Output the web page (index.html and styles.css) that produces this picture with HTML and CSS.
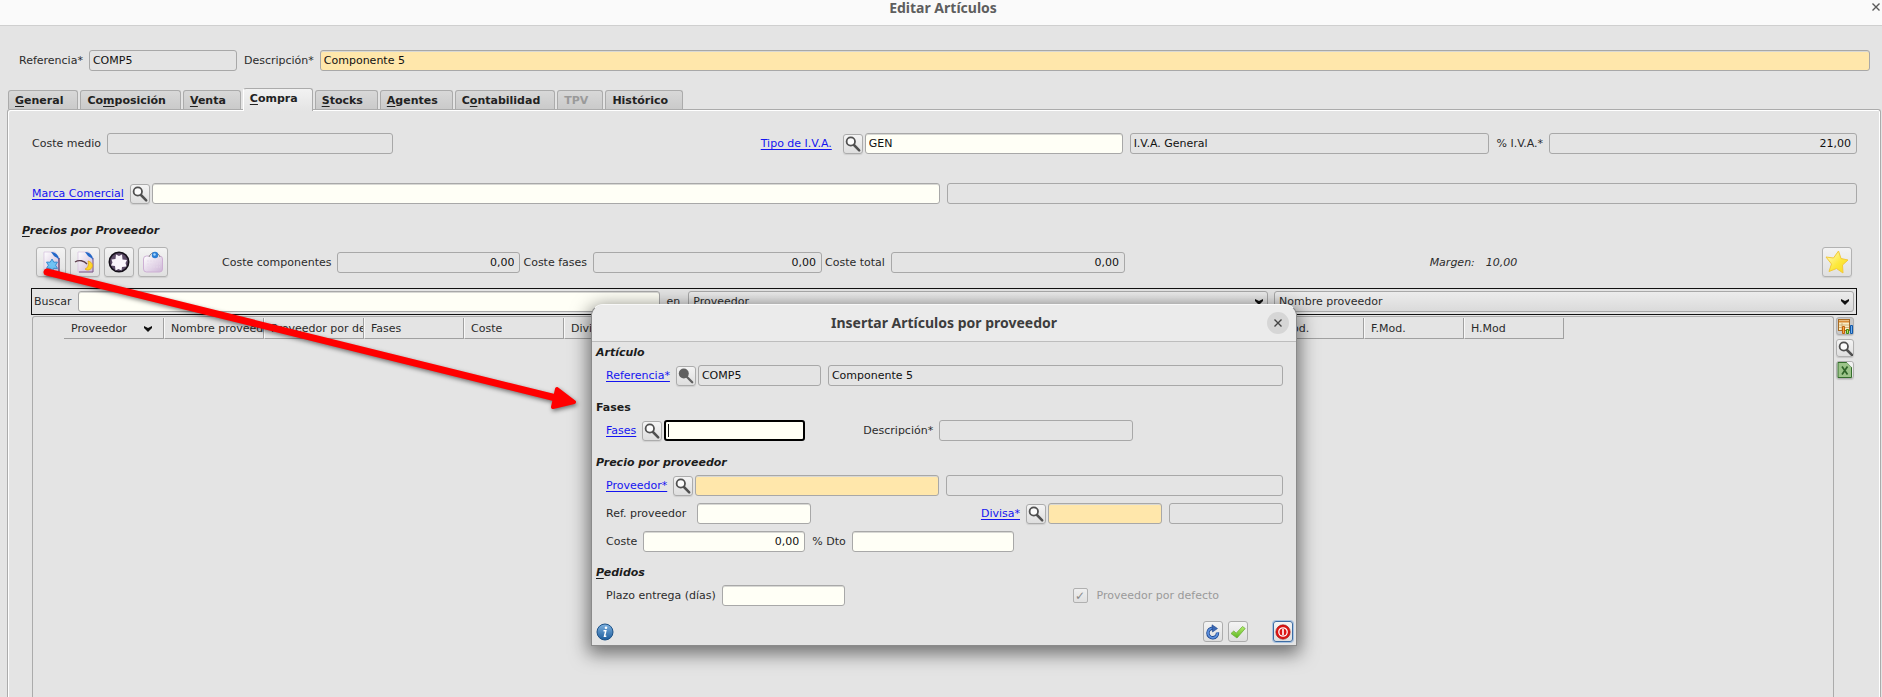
FILE: index.html
```html
<!DOCTYPE html>
<html lang="es">
<head>
<meta charset="utf-8">
<title>Editar Artículos</title>
<link rel="stylesheet" href="styles.css">
</head>
<body>
<svg class="defs" aria-hidden="true">
  <defs>
    <linearGradient id="shade" x1="0" y1="0" x2="1" y2="1"><stop offset="0" stop-color="#fff"/><stop offset="1" stop-color="#cdb5d6"/></linearGradient>
    <linearGradient id="leaf" x1="0" y1="0" x2="0" y2="1"><stop offset="0" stop-color="#b6ef6e"/><stop offset="1" stop-color="#5cb520"/></linearGradient>
    <linearGradient id="sky" x1="0" y1="0" x2="0" y2="1"><stop offset="0" stop-color="#7fb2e0"/><stop offset="1" stop-color="#1c5c9c"/></linearGradient>
    <linearGradient id="gold" x1="0" y1="0" x2="1" y2="1"><stop offset="0" stop-color="#fffbd0"/><stop offset="0.55" stop-color="#fde93c"/><stop offset="1" stop-color="#f8d820"/></linearGradient>
    <symbol id="lens" viewBox="0 0 18 18"><circle cx="6.800" cy="6.500" r="4.200" fill="#fcfcfc" stroke="#505050" stroke-width="1.800"/><path d="M10 10l5.200 5.300" stroke="#505050" stroke-width="2.500" stroke-linecap="round"/></symbol>
    <symbol id="lens-off" viewBox="0 0 18 18"><circle cx="6.800" cy="6.500" r="5" fill="#606060"/><path d="M10 10l5.200 5.300" stroke="#606060" stroke-width="2.300" stroke-linecap="round"/></symbol>
  </defs>
</svg>

<header class="titlebar">
  <h1 class="title">Editar Artículos</h1>
  <button class="window-close" aria-label="Cerrar"><svg viewBox="0 0 8 8" width="8" height="8"><path d="M.5.5l7 7M7.5.5l-7 7" stroke="#5a5a5a" stroke-width="1.4"/></svg></button>
</header>

<main class="window">
  <div class="row head-row">
    <label for="ref">Referencia*</label>
    <input class="field ro head-ref" id="ref" value="COMP5" readonly>
    <label class="next" for="desc">Descripción*</label>
    <input class="field need wide" id="desc" value="Componente 5">
  </div>

  <nav class="tabs">
    <button class="tab"><u>G</u>eneral</button>
    <button class="tab">Co<u>m</u>posición</button>
    <button class="tab"><u>V</u>enta</button>
    <button class="tab active"><u>C</u>ompra</button>
    <button class="tab"><u>S</u>tocks</button>
    <button class="tab"><u>A</u>gentes</button>
    <button class="tab">C<u>o</u>ntabilidad</button>
    <button class="tab" disabled>TPV</button>
    <button class="tab">Histórico</button>
  </nav>

  <section class="pane">
    <div class="row vat-row">
      <div class="row cost-part">
        <label for="medio">Coste medio</label>
        <input class="field ro cost-mean" id="medio" readonly>
      </div>
      <a class="link vat-link" href="#iva">Tipo de I.V.A.</a>
      <button class="lens-btn" aria-label="Buscar tipo de I.V.A."><svg><use href="#lens"/></svg></button>
      <input class="field vat-code" id="iva" aria-label="Tipo de I.V.A." value="GEN">
      <input class="field ro vat-name next" aria-label="Nombre de I.V.A." value="I.V.A. General" readonly>
      <label class="next" for="pct">% I.V.A.*</label>
      <input class="field ro num vat-pct" id="pct" value="21,00" readonly>
    </div>

    <div class="row brand-row">
      <a class="link" href="#marca">Marca Comercial</a>
      <button class="lens-btn" aria-label="Buscar marca"><svg><use href="#lens"/></svg></button>
      <input class="field brand-code" id="marca" aria-label="Marca Comercial">
      <input class="field ro brand-name next" aria-label="Nombre de marca" readonly>
    </div>

    <h2 class="group prices"><u>P</u>recios por Proveedor</h2>

    <div class="row tool-row">
      <div class="tools">
        <button class="tool" aria-label="Nuevo"><svg viewBox="0 0 24 24"><path d="M5 2h11l4 6v14H5z" fill="url(#shade)" stroke="#d4bfdc" stroke-width=".7"/><path d="M20 8v14" stroke="#57305f" stroke-width="1.2"/><path d="M12 2c4 0 8 3 8 8-2-3-4-3-5-4z" fill="#2268c8"/><path d="M13 9l1.800 3.200 3.700-.1-1.900 3.100 1.900 3.200-3.700-.1L13 21.500l-1.800-3.200-3.700.1 1.900-3.200-1.900-3.100 3.700.1z" fill="#6fc3f5" stroke="#2f87cd" stroke-width=".9"/></svg></button>
        <button class="tool" aria-label="Editar"><svg viewBox="0 0 24 24"><path d="M5 2h11l4 6v14H5z" fill="url(#shade)" stroke="#d4bfdc" stroke-width=".7"/><path d="M20 8v14H6" fill="none" stroke="#7b5a86" stroke-width="1"/><path d="M12 2c4 0 8 3 8 8-2-3-4-3-5-4z" fill="#2268c8"/><path d="M2 12c4-2.500 9-1.500 12 2" fill="none" stroke="#5a3b4a" stroke-width="1.300"/><path d="M15 11c5 1 6 6 2 8.500-2 1-4 .5-5-.5 3-1 4-4 3-8z" fill="#ffd829" stroke="#e2a714" stroke-width=".8"/></svg></button>
        <button class="tool" aria-label="Borrar"><svg viewBox="0 0 24 24"><circle cx="12" cy="12" r="9.700" fill="#5d4b68" stroke="#15101a" stroke-width="1.600"/><path d="M9 4.500l3 1.500 3-1.500.5 5 4.500.5-1.500 3 1 3.500-4.500.5-.5 3.500-3-1.500-3 1.500-.5-4.500-4-.5 1.500-3L4.500 9.500 8.500 9z" fill="#fbf6fc"/></svg></button>
        <button class="tool" aria-label="Ver"><svg viewBox="0 0 24 24"><rect x="2.500" y="6" width="19" height="16" rx="3" fill="url(#shade)" stroke="#cdb0d4"/><path d="M6 11h13M6 14h13M6 17h13" stroke="#e6d8ea" stroke-width=".8" stroke-dasharray="2 1"/><path d="M8 7c2-6 9-6 11 0" fill="#e8e8f0" stroke="#888" stroke-width="1"/><circle cx="14" cy="5" r="3.200" fill="#2c7ed4"/><circle cx="13.500" cy="4.500" r="1.200" fill="#a8d8ff"/></svg></button>
      </div>
      <label for="comp">Coste componentes</label>
      <input class="field ro num cost-comp" id="comp" value="0,00" readonly>
      <label class="tight" for="fas">Coste fases</label>
      <input class="field ro num cost-phase" id="fas" value="0,00" readonly>
      <label class="tight" for="tot">Coste total</label>
      <input class="field ro num cost-total" id="tot" value="0,00" readonly>
      <div class="margin-part"><em>Margen:</em><em>10,00</em></div>
      <button class="tool" aria-label="Favorito"><svg viewBox="0 0 24 24"><path d="M13.500 1l2.500 7.500 7 1.500-5.500 5 .5 8-6.500-4.500L4 21.500 6.500 14 1 7l7.500 1z" fill="url(#gold)" stroke="#f3c93a" stroke-width="1"/></svg></button>
    </div>

    <div class="search">
      <label for="buscar">Buscar</label>
      <input class="field wide" id="buscar">
      <label class="in" for="col1">en</label>
      <div class="combo"><select id="col1"><option>Proveedor</option></select><svg viewBox="0 0 8 6"><path d="M0 0l4 2 4-2v2L4 6 0 2z" fill="#111"/></svg></div>
      <div class="combo"><select aria-label="Segunda columna"><option>Nombre proveedor</option></select><svg viewBox="0 0 8 6"><path d="M0 0l4 2 4-2v2L4 6 0 2z" fill="#111"/></svg></div>
    </div>

    <div class="results">
      <div class="grid-frame">
        <table class="grid">
          <thead><tr>
            <td class="mark"></td>
            <th class="sorted"><span>Proveedor</span><svg viewBox="0 0 8 6"><path d="M0 0l4 2 4-2v2L4 6 0 2z" fill="#111"/></svg></th>
            <th>Nombre proveedor</th><th>Proveedor por defecto</th><th>Fases</th><th>Coste</th><th>Divisa</th>
            <th></th><th></th><th></th><th></th><th></th><th></th>
            <th>U.Mod.</th><th>F.Mod.</th><th>H.Mod</th>
          </tr></thead>
        </table>
      </div>
      <div class="side">
        <button class="side-btn pressed" aria-label="Columnas"><svg viewBox="0 0 16 16"><rect x="1.500" y="1.500" width="11" height="11" fill="#f7ecc4" stroke="#a66a24"/><path d="M2 3.500h10" stroke="#d98a35" stroke-width="2"/><path d="M2 7h10M2 9.500h10M5 5v7" stroke="#c9a368" stroke-width=".8"/><path d="M5.500 15.500v-7h2v7z" fill="#f7a94a" stroke="#c0600c"/><path d="M9.500 15.500v-4h2v4z" fill="#b5e26a" stroke="#3f8a10"/><path d="M13.500 15.500v-8h2v8z" fill="#6fb0f0" stroke="#1258a8"/></svg></button>
        <button class="side-btn" aria-label="Buscar"><svg viewBox="0 0 16 16"><use href="#lens" width="18" height="18"/></svg></button>
        <button class="side-btn" aria-label="Exportar"><svg viewBox="0 0 16 16"><path d="M1 .5h9l4.500 4.500v10.500H1z" fill="#9cc489" stroke="#356e2c"/><path d="M9.500 0L15 5.500V0z" fill="#f2f2f2"/><path d="M5 4.500l5.500 8M10.500 4.500L5 12.500" stroke="#2f6428" stroke-width="1.700"/></svg></button>
      </div>
    </div>
  </section>
</main>

<section class="dialog" role="dialog" aria-labelledby="dlg-title">
  <header class="dialog-bar">
    <h2 class="title" id="dlg-title">Insertar Artículos por proveedor</h2>
    <button class="round-close" aria-label="Cerrar"><svg viewBox="0 0 8 8" width="8" height="8"><path d="M.5.5l7 7M7.5.5l-7 7" stroke="#444" stroke-width="1.4"/></svg></button>
  </header>
  <div class="dialog-body">
    <h3 class="group">Artículo</h3>
    <div class="row indent">
      <a class="link" href="#d-ref">Referencia*</a>
      <button class="lens-btn" aria-label="Buscar referencia" disabled><svg><use href="#lens-off"/></svg></button>
      <input class="field ro w-code" id="d-ref" aria-label="Referencia" value="COMP5" readonly>
      <input class="field ro wide next" aria-label="Nombre del artículo" value="Componente 5" readonly>
    </div>
    <h3 class="group plain spaced">Fases</h3>
    <div class="row indent">
      <a class="link" href="#d-fase">Fases</a>
      <button class="lens-btn" aria-label="Buscar fase"><svg><use href="#lens"/></svg></button>
      <input class="field focus w-phase" id="d-fase" aria-label="Fases" autofocus>
      <label class="phase-label" for="d-desc">Descripción*</label>
      <input class="field ro w-desc" id="d-desc" readonly>
    </div>
    <h3 class="group spaced">Precio por proveedor</h3>
    <div class="stack">
      <div class="row indent">
        <a class="link" href="#d-prov">Proveedor*</a>
        <button class="lens-btn" aria-label="Buscar proveedor"><svg><use href="#lens"/></svg></button>
        <input class="field need w-supplier" id="d-prov" aria-label="Proveedor">
        <input class="field ro wide next" aria-label="Nombre del proveedor" readonly>
      </div>
      <div class="row indent">
        <label class="ref-label" for="d-rp">Ref. proveedor</label>
        <input class="field w-short" id="d-rp">
        <a class="link push" href="#d-div">Divisa*</a>
        <button class="lens-btn" aria-label="Buscar divisa"><svg><use href="#lens"/></svg></button>
        <input class="field need w-short" id="d-div" aria-label="Divisa">
        <input class="field ro w-short next" aria-label="Nombre de divisa" readonly>
      </div>
      <div class="row indent">
        <label for="d-coste">Coste</label>
        <input class="field num w-cost" id="d-coste" value="0,00">
        <label class="next" for="d-dto">% Dto</label>
        <input class="field w-cost" id="d-dto">
      </div>
    </div>
    <h3 class="group last"><u>P</u>edidos</h3>
    <div class="row indent">
      <label for="d-plazo">Plazo entrega (días)</label>
      <input class="field w-code" id="d-plazo">
      <label class="check"><input type="checkbox" checked disabled>Proveedor por defecto</label>
    </div>
    <footer class="actions">
      <svg class="info" viewBox="0 0 18 18"><circle cx="9" cy="9" r="8" fill="url(#sky)" stroke="#1d5288"/><circle cx="10" cy="4.800" r="1.300" fill="#fff"/><path d="M7.500 7.800h2.300L8.500 13.300h1.800" fill="none" stroke="#fff" stroke-width="1.500"/></svg>
      <button class="action" aria-label="Recargar"><svg viewBox="0 0 16 16"><path d="M12.500 8.500A4.800 4.800 0 1 1 8 4.200" fill="none" stroke="#1d468f" stroke-width="3.400"/><path d="M12.500 8.500A4.800 4.800 0 1 1 8 4.200" fill="none" stroke="#5b8fdc" stroke-width="1.800"/><path d="M7 .8l5.500 3.700L7.500 8z" fill="#3b68b4" stroke="#1d468f" stroke-width=".6"/></svg></button>
      <button class="action" aria-label="Aceptar"><svg viewBox="0 0 16 16"><path d="M1 9.500l2.800-2.500 2.400 2.200L12.500 2.500 15.200 4.500 7 14z" fill="url(#leaf)" stroke="#6cae3a" stroke-width=".8"/></svg></button>
      <button class="action cancel" aria-label="Cancelar"><svg viewBox="0 0 16 16"><circle cx="8" cy="8" r="7.200" fill="#dc1414" stroke="#9c0c0c" stroke-width=".6"/><circle cx="8" cy="8" r="4.200" fill="none" stroke="#fff" stroke-width="1.300"/><rect x="7.200" y="5" width="1.600" height="6" fill="#fff"/></svg></button>
    </footer>
  </div>
</section>

<svg class="arrow" width="600" height="430" viewBox="0 0 600 430" aria-hidden="true"><path d="M47 272L556 398" stroke="#f00" stroke-width="7" stroke-linecap="round"/><path d="M557 389L574 402 553 407z" fill="#f00" stroke="#f00" stroke-width="4" stroke-linejoin="round"/></svg>
</body>
</html>
```
FILE: styles.css
```css
* { box-sizing: border-box; }

body {
  margin: 0;
  height: 100vh;
  display: flex;
  flex-direction: column;
  overflow: hidden;
  position: relative;
  background: #e4e4e4;
  color: #2b2b2b;
  font: 11px/13px "DejaVu Sans", sans-serif;
}

button, input, select { font: inherit; color: inherit; margin: 0; }
button { padding: 0; }
h1, h2, h3 { margin: 0; }
label, .link { white-space: nowrap; }
.defs { position: absolute; width: 0; height: 0; }

.titlebar {
  height: 26px;
  display: flex;
  align-items: flex-start;
  background: #fafafa;
  border-bottom: 1px solid #cfcfcf;
}
.title {
  flex: 1;
  text-align: center;
  font: bold 14px/16px "Noto Sans", sans-serif;
  color: #5e5e5e;
}
.titlebar .title { padding-left: 16px; }
.window-close {
  width: 12px;
  height: 14px;
  border: 0;
  background: none;
  line-height: 0;
}

.window {
  flex: 1;
  min-height: 0;
  display: flex;
  flex-direction: column;
}

.row { display: flex; align-items: center; }
.row > .field { margin-left: 6px; }
.row > .next { margin-left: 7px; }
.row > .lens-btn + .field { margin-left: 2px; }
.row > .tight { margin-left: 3px; }

.field {
  height: 21px;
  min-width: 0;
  padding: 0 3px;
  border: 1px solid #a8a8a8;
  border-radius: 3px;
  background: #fffff6;
  color: #111;
  box-shadow: inset 0 1px 0 #d8d8d4;
  outline: 0;
}
.ro { background: #e4e4e4; box-shadow: none; }
.need { background: #ffe7ab; }
.num { text-align: right; padding-right: 5px; }
.focus {
  border: 2px solid #000;
  box-shadow: none;
  caret-color: transparent;
  background: linear-gradient(#111, #111) 2px 2px / 1px 13px no-repeat #fffff6;
}
.wide { flex: 1; }

.link { color: #1414f0; text-decoration: underline; text-underline-offset: 2px; }

.lens-btn {
  flex: none;
  width: 20px;
  height: 20px;
  margin-left: 6px;
  border: 1px solid #acacac;
  border-radius: 3px;
  background: linear-gradient(#f4f4f4, #dedede);
  box-shadow: 0 1px 1px #cfcfcf;
}
.lens-btn svg { display: block; width: 18px; height: 18px; }

.head-row { padding: 24px 12px 0 19px; }
.head-ref { width: 148px; }

.tabs {
  display: flex;
  align-items: flex-end;
  gap: 2px;
  padding: 17px 8px 0;
}
.tab {
  height: 19px;
  padding: 0 14px 0 6px;
  border: 1px solid #ababab;
  border-bottom: 0;
  border-radius: 3px 3px 0 0;
  background: linear-gradient(#d8d8d8, #cacaca);
  font-weight: bold;
  color: #222;
}
.tab:disabled { color: #9a9a9a; }
.tab u, .group u { text-underline-offset: 2px; }
.tab.active {
  height: 23px;
  margin-bottom: -2px;
  padding-bottom: 3px;
  position: relative;
  background: linear-gradient(#f2f2f2, #e4e4e4);
  border-color: #ababab #ababab #e4e4e4 #fff;
}

.pane {
  flex: 1;
  min-height: 0;
  display: flex;
  flex-direction: column;
  margin: 0 1px 0 7px;
  padding: 23px 23px 0 23px;
  border: 1px solid #ababab;
  border-bottom: 0;
  border-radius: 3px 3px 0 0;
  box-shadow: inset 1px 1px 0 #fff, inset -1px 0 0 #fff;
}

.vat-row { padding-left: 1px; }
.cost-part { flex: 729 1 0; }
.cost-mean { width: 286px; }
.vat-link { min-width: 76px; }
.vat-code { flex: 250 1 0; }
.vat-name { flex: 352 1 0; }
.vat-pct { flex: 298 1 0; }

.brand-row { padding: 29px 0 0 1px; }
.brand-code { flex: 780 1 0; }
.brand-name { flex: 901 1 0; }

.group { font: italic bold 11px/13px "DejaVu Sans", sans-serif; color: #1c1c1c; }
.group.plain { font-style: normal; }
.prices { margin: 20px 0 0 -9px; }

.tool-row { padding: 10px 5px 0; }
.tools { display: flex; gap: 4px; margin-right: 54px; }
.tool {
  flex: none;
  width: 30px;
  height: 30px;
  display: grid;
  place-items: center;
  border: 1px solid #b2b2b2;
  border-radius: 3px;
  background: linear-gradient(#f3f3f3, #e0e0e0);
  box-shadow: 0 1px 1px #cfcfcf;
}
.tool svg { width: 24px; height: 24px; }
.cost-comp { flex: 173 1 0; }
.cost-phase { flex: 219 1 0; }
.cost-total { flex: 224 1 0; }
.margin-part { flex: 697 1 0; display: flex; justify-content: center; gap: 11px; }

.search {
  display: flex;
  align-items: center;
  gap: 6px;
  margin-top: 11px;
  padding: 2px;
  border: 1px solid #111;
}
.search .wide { flex: 576 1 0; }
.search .in { margin-right: 2px; }
.combo { flex: 581 1 0; position: relative; }
.combo select {
  display: block;
  width: 100%;
  height: 21px;
  padding: 0 4px;
  appearance: none;
  border: 1px solid #a8a8a8;
  border-radius: 3px;
  background: linear-gradient(#ececec, #dadada);
}
.combo svg { position: absolute; right: 5px; top: 8px; width: 8px; height: 6px; }

.results { flex: 1; min-height: 0; display: flex; gap: 2px; padding: 1px 3px 0 1px; }
.grid-frame {
  flex: 1;
  min-width: 0;
  padding-top: 1px;
  overflow: hidden;
  border: 1px solid #ababab;
  border-bottom: 0;
  border-radius: 3px 3px 0 0;
}
.grid { table-layout: fixed; width: 1531px; border-collapse: separate; border-spacing: 0; }
.mark { width: 31px; padding: 0; }
.grid th {
  height: 21px;
  padding: 0 0 0 6px;
  overflow: hidden;
  white-space: nowrap;
  text-align: left;
  font-weight: normal;
  border-bottom: 1px solid #a0a0a0;
  border-right: 1px solid #a0a0a0;
  border-left: 1px solid #f8f8f8;
}
.grid .sorted { border-left: 0; padding-left: 7px; }
.sorted svg { width: 8px; height: 6px; margin-left: 17px; }

.side { display: flex; flex-direction: column; gap: 4px; padding-top: 1px; }
.side-btn {
  width: 18px;
  height: 18px;
  border: 1px solid #b0b0b0;
  border-radius: 3px;
  background: linear-gradient(#f4f4f4, #dedede);
  box-shadow: 0 1px 1px #c6c6c6;
}
.side-btn svg { display: block; width: 16px; height: 16px; }
.pressed { background: #c8c8c8; }

.dialog {
  position: absolute;
  left: 591px;
  top: 304px;
  width: 706px;
  border: 1px solid #8a8a8a;
  border-top-color: #f8f8f8;
  border-radius: 12px 12px 0 0;
  background: #e4e4e4;
  box-shadow: 0 5px 18px 3px rgba(0, 0, 0, 0.5);
}
.dialog-bar {
  display: flex;
  align-items: center;
  height: 37px;
  padding: 0 7px 0 29px;
  border-bottom: 1px solid #bdbdbd;
  border-radius: 12px 12px 0 0;
  background: #ebebeb;
}
.dialog-bar .title { color: #3d3d3d; }
.round-close {
  width: 22px;
  height: 22px;
  border: 0;
  border-radius: 50%;
  background: #d6d6d6;
  line-height: 0;
}
.dialog-body { padding: 4px 3px 3px 4px; }
.indent { padding: 0 10px; }
.dialog-body .group { padding-bottom: 6px; }
.dialog-body .spaced { padding-top: 15px; }
.dialog-body .last { padding-top: 14px; }
.stack { display: flex; flex-direction: column; gap: 7px; }
.w-code { width: 123px; }
.w-phase { width: 141px; }
.w-desc { width: 194px; }
.w-supplier { width: 244px; }
.w-short { width: 114px; }
.w-cost { width: 162px; }
.phase-label { margin-left: 58px; }
.ref-label { min-width: 85px; }
.push { margin-left: auto; }

.check { display: flex; align-items: center; gap: 9px; margin: 0 64px 0 auto; color: #9a9a9a; }
.check input {
  appearance: none;
  width: 15px;
  height: 15px;
  border: 1px solid #b0b0b0;
  border-radius: 2px;
  background: linear-gradient(#efefef, #e0e0e0);
  display: grid;
  place-items: center;
}
.check input::after { content: "✓"; font: bold 12px/12px "DejaVu Sans", sans-serif; color: #888; }

.actions { display: flex; align-items: center; gap: 5px; padding-top: 15px; }
.info { width: 18px; height: 18px; margin-right: auto; }
.action {
  width: 20px;
  height: 21px;
  display: grid;
  place-items: center;
  border: 1px solid #acacac;
  border-radius: 3px;
  background: linear-gradient(#f4f4f4, #dedede);
}
.action svg { width: 16px; height: 16px; }
.cancel { margin-left: 20px; border-color: #3d6ca3; box-shadow: 0 0 0 1px #a9c3e0; }

.arrow {
  position: absolute;
  left: 0;
  top: 0;
  pointer-events: none;
  filter: drop-shadow(1px 2px 2px rgba(0, 0, 0, 0.5));
}
```
